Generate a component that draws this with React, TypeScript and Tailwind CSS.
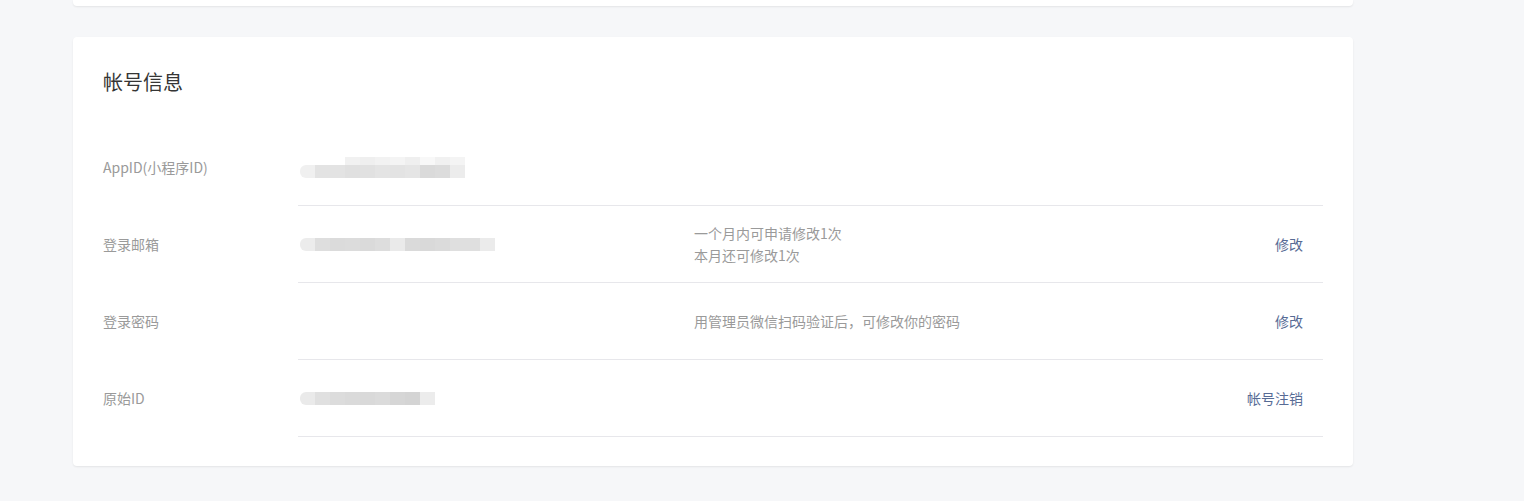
import React from 'react';

const font = { fontFamily: '"Noto Sans CJK SC", "Noto Sans", sans-serif' };

// mosaic placeholders for masked values
const Mosaic: React.FC<{ cells: string[]; top?: string[] }> = ({ cells, top }) => (
  <div className="flex flex-col">
    {top && (
      <div className="flex h-[8px] pl-[45px]">
        {top.map((c, i) => (
          <div key={i} className="w-[15px] h-full" style={{ background: c }} />
        ))}
      </div>
    )}
    <div className="flex h-[13px] rounded-[6px] overflow-hidden">
      {cells.map((c, i) => (
        <div key={i} className="w-[15px] h-full" style={{ background: c }} />
      ))}
    </div>
  </div>
);

type Row = {
  label: string;
  value?: React.ReactNode;
  desc?: string[];
  action?: string;
};

const rows: Row[] = [
  {
    label: 'AppID(小程序ID)',
    value: (
      <Mosaic
        top={['#f1f1f1', '#efefef', '#f2f2f2', '#f4f4f4', '#efefef', '#f8f8f8', '#f1f1f1', '#f4f4f4']}
        cells={['#f0f0f0', '#e3e3e3', '#e3e3e3', '#e0e0e0', '#e1e1e1', '#e4e4e4', '#e3e3e3', '#e5e5e5', '#dadada', '#dcdcdc', '#ececec']}
      />
    ),
  },
  {
    label: '登录邮箱',
    value: (
      <Mosaic
        cells={['#ececec', '#dedede', '#dbdbdb', '#dcdcdc', '#dadada', '#dddddd', '#eaeaea', '#dadada', '#d9d9d9', '#dbdbdb', '#dfdfdf', '#dfdfdf', '#ebebeb']}
      />
    ),
    desc: ['一个月内可申请修改1次', '本月还可修改1次'],
    action: '修改',
  },
  {
    label: '登录密码',
    desc: ['用管理员微信扫码验证后，可修改你的密码'],
    action: '修改',
  },
  {
    label: '原始ID',
    value: (
      <Mosaic
        cells={['#eaeaea', '#e0e0e0', '#dcdcdc', '#dadada', '#d9d9d9', '#dbdbdb', '#d6d6d6', '#d4d4d4', '#ececec']}
      />
    ),
    action: '帐号注销',
  },
];

export default function App() {
  return (
    <div className="min-h-[501px] bg-[#f6f7f9] pl-[73px] w-[1524px]" style={font}>
      <div className="w-[1280px] h-[6px] bg-white rounded-b-[4px] shadow-[0_1px_2px_rgba(0,0,0,0.08)]" />
      <div className="w-[1280px] mt-[31px] bg-white rounded-[4px] shadow-[0_1px_2px_rgba(0,0,0,0.08)] px-[30px] pt-[30px] pb-[29px]">
        <h2 className="text-[20px] leading-[30px] text-[#353535] font-normal">帐号信息</h2>
        <div className="mt-[32px]">
          {rows.map((r) => (
            <div key={r.label} className="flex">
              <div className="w-[195px] flex items-center text-[14px] text-[#9a9a9a]">{r.label}</div>
              <div className="flex-1 h-[77px] flex items-center border-b border-[#e7e7eb] pr-[20px]">
                <div className="w-[396px] pl-[2px]">{r.value}</div>
                <div className="flex-1 text-[14px] leading-[22px] text-[#9a9a9a]">
                  {r.desc?.map((d) => (
                    <div key={d}>{d}</div>
                  ))}
                </div>
                {r.action && (
                  <a className="text-[14px] text-[#576b95] cursor-pointer">{r.action}</a>
                )}
              </div>
            </div>
          ))}
        </div>
      </div>
    </div>
  );
}
